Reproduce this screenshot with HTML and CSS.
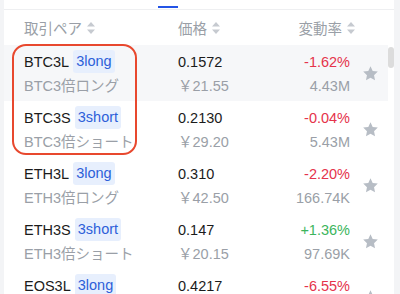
FILE: index.html
```html
<!DOCTYPE html>
<html lang="ja">
<head>
  <meta charset="UTF-8">
  <meta name="viewport" content="width=device-width, initial-scale=1.0">
  <title>取引ペア</title>
  <link rel="stylesheet" href="styles.css">
</head>
<body>
  <div class="panel">
    <div class="tabs"><span class="tab-line"></span></div>

    <div class="content">
      <div class="list">
        <div class="head">
          <div class="th">取引ペア <svg class="sort" viewBox="0 0 8 12"><path d="M4 0 8 4.5H0z M0 7.5H8L4 12z"/></svg></div>
          <div class="th">価格 <svg class="sort" viewBox="0 0 8 12"><path d="M4 0 8 4.5H0z M0 7.5H8L4 12z"/></svg></div>
          <div class="th th-right">変動率 <svg class="sort" viewBox="0 0 8 12"><path d="M4 0 8 4.5H0z M0 7.5H8L4 12z"/></svg></div>
          <div></div>
        </div>

        <div class="row active">
          <div class="cell">
            <div class="main">BTC3L <span class="tag">3long</span></div>
            <div class="sub">BTC3倍ロング</div>
          </div>
          <div class="cell">
            <div class="main">0.1572</div>
            <div class="sub">￥21.55</div>
          </div>
          <div class="cell right">
            <div class="main down">-1.62%</div>
            <div class="sub">4.43M</div>
          </div>
          <div class="fav"><svg viewBox="0 0 24 24"><path d="M12 1.8l3.1 6.6 7.2.9-5.3 5 1.4 7.1L12 17.9l-6.4 3.5 1.4-7.1-5.3-5 7.2-.9z"/></svg></div>
        </div>

        <div class="row">
          <div class="cell">
            <div class="main">BTC3S <span class="tag">3short</span></div>
            <div class="sub">BTC3倍ショート</div>
          </div>
          <div class="cell">
            <div class="main">0.2130</div>
            <div class="sub">￥29.20</div>
          </div>
          <div class="cell right">
            <div class="main down">-0.04%</div>
            <div class="sub">5.43M</div>
          </div>
          <div class="fav"><svg viewBox="0 0 24 24"><path d="M12 1.8l3.1 6.6 7.2.9-5.3 5 1.4 7.1L12 17.9l-6.4 3.5 1.4-7.1-5.3-5 7.2-.9z"/></svg></div>
        </div>

        <div class="row">
          <div class="cell">
            <div class="main">ETH3L <span class="tag">3long</span></div>
            <div class="sub">ETH3倍ロング</div>
          </div>
          <div class="cell">
            <div class="main">0.310</div>
            <div class="sub">￥42.50</div>
          </div>
          <div class="cell right">
            <div class="main down">-2.20%</div>
            <div class="sub">166.74K</div>
          </div>
          <div class="fav"><svg viewBox="0 0 24 24"><path d="M12 1.8l3.1 6.6 7.2.9-5.3 5 1.4 7.1L12 17.9l-6.4 3.5 1.4-7.1-5.3-5 7.2-.9z"/></svg></div>
        </div>

        <div class="row">
          <div class="cell">
            <div class="main">ETH3S <span class="tag">3short</span></div>
            <div class="sub">ETH3倍ショート</div>
          </div>
          <div class="cell">
            <div class="main">0.147</div>
            <div class="sub">￥20.15</div>
          </div>
          <div class="cell right">
            <div class="main up">+1.36%</div>
            <div class="sub">97.69K</div>
          </div>
          <div class="fav"><svg viewBox="0 0 24 24"><path d="M12 1.8l3.1 6.6 7.2.9-5.3 5 1.4 7.1L12 17.9l-6.4 3.5 1.4-7.1-5.3-5 7.2-.9z"/></svg></div>
        </div>

        <div class="row">
          <div class="cell">
            <div class="main">EOS3L <span class="tag">3long</span></div>
            <div class="sub">EOS3倍ロング</div>
          </div>
          <div class="cell">
            <div class="main">0.4217</div>
            <div class="sub">￥57.80</div>
          </div>
          <div class="cell right">
            <div class="main down">-6.55%</div>
            <div class="sub">88.12K</div>
          </div>
          <div class="fav"><svg viewBox="0 0 24 24"><path d="M12 1.8l3.1 6.6 7.2.9-5.3 5 1.4 7.1L12 17.9l-6.4 3.5 1.4-7.1-5.3-5 7.2-.9z"/></svg></div>
        </div>
      </div>

      <div class="scrollbar"><div class="thumb"></div></div>
    </div>

    <div class="callout"></div>
  </div>
</body>
</html>
```

FILE: styles.css
```css
html, body { margin: 0; height: 100%; overflow: hidden; }
body { background: #f3f4f6; font-family: "Liberation Sans", "Noto Sans CJK JP", sans-serif; font-size: 14.5px; color: #1b1b1b; }

.panel { position: relative; margin: 0 6px 0 4px; background: #fff; min-height: 100%; }
.tabs { height: 10px; box-sizing: border-box; padding: 6px 0 0 154px; border-bottom: 1px solid #eeeff1; }
.tab-line { display: block; width: 20px; height: 2px; background: #2354e6; }

.content { display: flex; }
.list { flex: 1; }

.head, .row { display: grid; grid-template-columns: 154px 1fr auto 38px; padding-left: 20px; }
.head { height: 35px; align-items: center; color: #9a9fa7; }
.th { display: flex; align-items: center; gap: 5px; }
.th-right { justify-self: end; margin-right: -5px; }
.sort { width: 8px; height: 12px; fill: #c6cad0; }

.row { height: 56px; box-sizing: border-box; padding-top: 5px; }
.row.active { background: #f6f7f9; }
.cell { display: flex; flex-direction: column; }
.cell.right { align-items: flex-end; }
.main { display: flex; align-items: center; gap: 4px; height: 23px; }
.sub { height: 20px; line-height: 20px; margin-top: 3px; color: #9a9fa7; }

.tag { padding: 0 3px; line-height: 23px; background: #e7effd; color: #2d5fd9; border-radius: 3px; }
.down { color: #e5334b; }
.up { color: #3bb55c; }

.fav { display: flex; align-items: center; justify-content: center; margin: -5px 0 0 2px; }
.fav svg { width: 17px; height: 17px; fill: #b7bdc5; }

.scrollbar { width: 6px; }
.thumb { width: 6px; height: 21px; margin-top: 37px; background: #dcdcdc; border-radius: 3px; }

.callout { position: absolute; left: 8px; top: 44px; width: 125px; height: 111px; box-sizing: border-box; border: 2.5px solid #e8482e; border-radius: 14px; }
```
